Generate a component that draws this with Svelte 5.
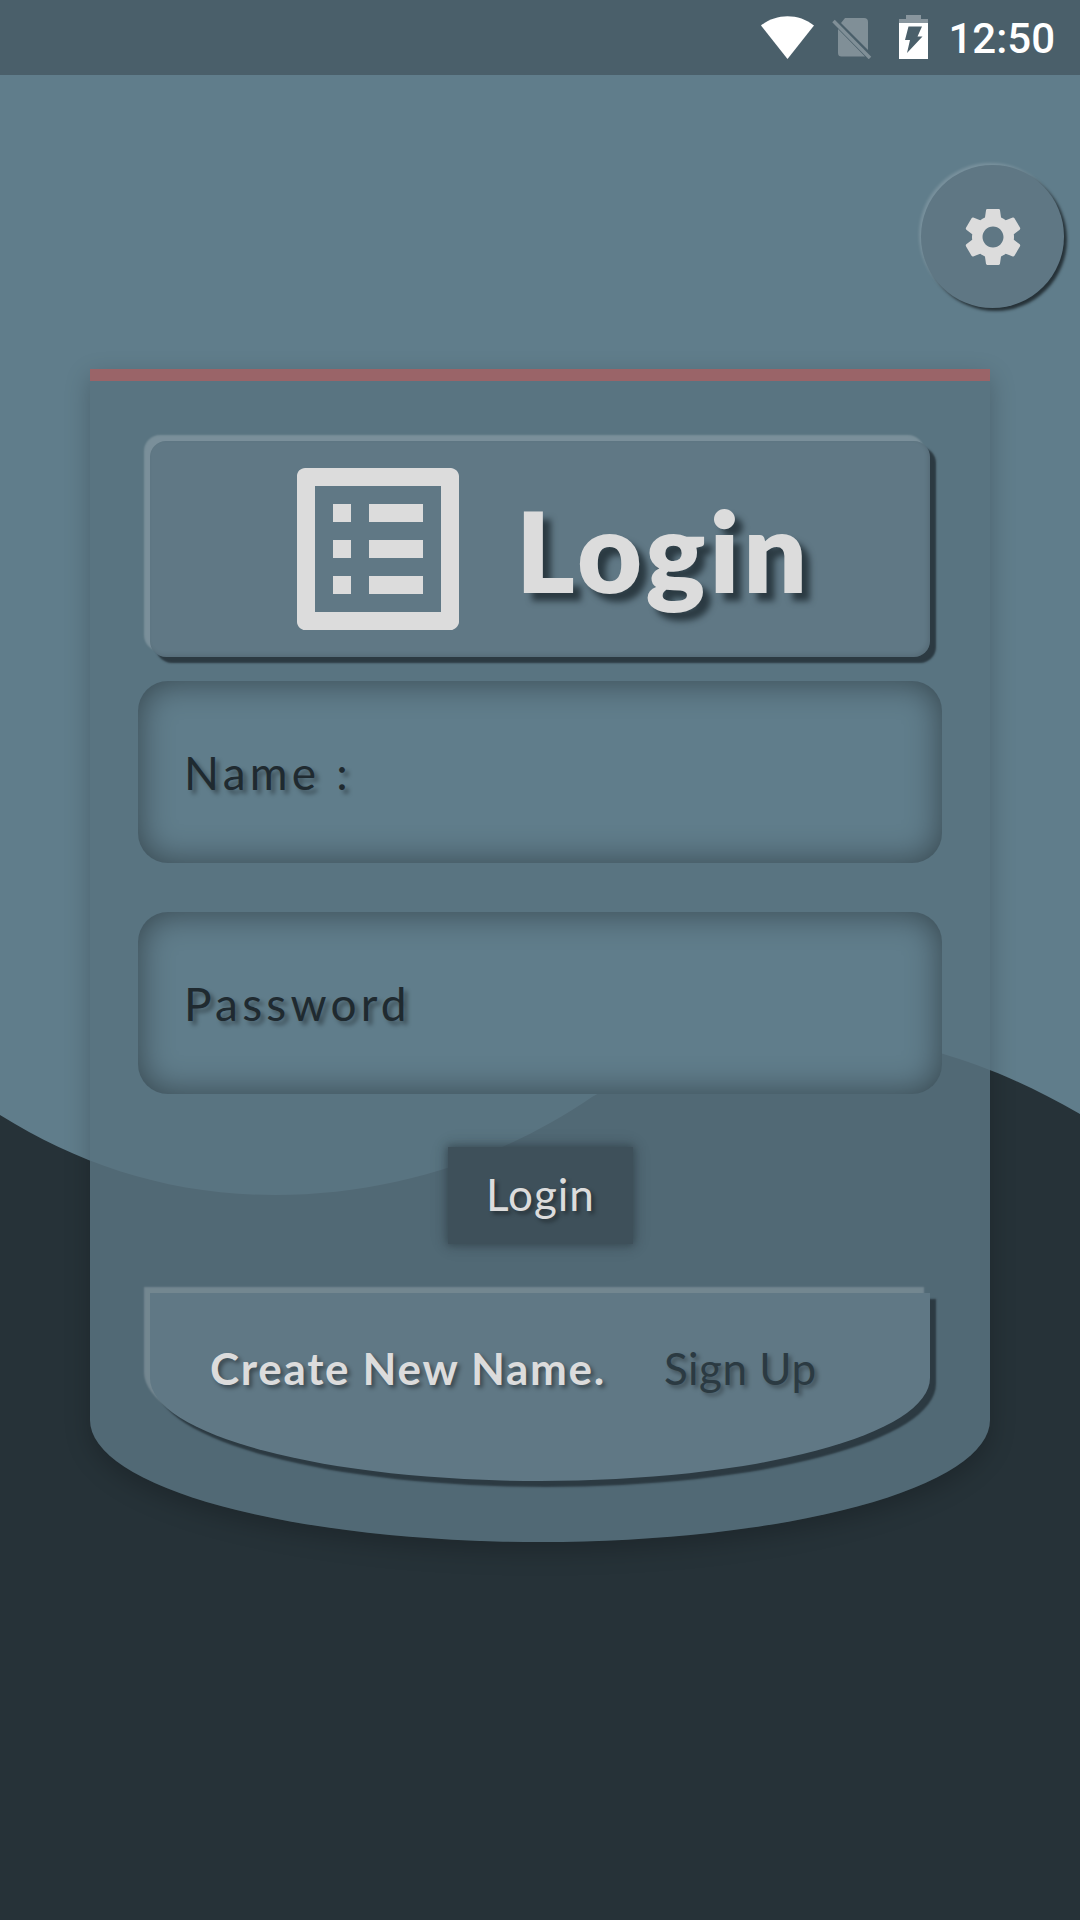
<script>
  let name = "Name :";
  let password = "Password";
</script>

<div class="page">
  <svg class="backdrop" viewBox="0 0 1080 1920" aria-hidden="true">
    <path d="M0 0H1080V1114C1030 1085 985 1066 940 1053C830 1022 690 1040 592 1097C500 1160 390 1195 275 1195C170 1195 80 1165 0 1115Z" fill="#607d8b" />
  </svg>

  <div class="statusbar">
    <svg class="wifi" viewBox="0 0 53 43">
      <path d="M26.500 43L0 9.500C15 -3 38 -3 53 9.500Z" fill="#fff" />
    </svg>
    <svg class="nosim" viewBox="0 0 40 41">
      <path d="M13 0H32Q36 0 36 4V32L9 5ZM6 11V35Q6 38.500 9.500 38.500H33Z" fill="#fff" fill-opacity=".3" />
      <path d="M1.500 3L38 40" stroke="#fff" stroke-opacity=".3" stroke-width="3.500" />
    </svg>
    <svg class="battery" viewBox="0 0 29 44">
      <path d="M7 0H22V4H29V8H0V4H7Z" fill="#fff" fill-opacity=".35" />
      <path d="M0 8H29V44H0ZM9.500 11.500H23L18.500 21.500H23.500L8 38L11 25H6Z" fill="#fff" fill-rule="evenodd" />
    </svg>
    <span class="time">12:50</span>
  </div>

  <div class="settings-row">
    <button class="settings">
      <svg viewBox="0 0 24 24" width="70" height="70">
        <path fill="#dcdcdc" d="M19.14 12.94c.04-.3.06-.61.06-.94 0-.32-.02-.64-.07-.94l2.03-1.58c.18-.14.23-.41.12-.61l-1.92-3.32c-.12-.22-.37-.29-.59-.22l-2.39.96c-.5-.38-1.03-.7-1.62-.94l-.36-2.54c-.04-.24-.24-.41-.48-.41h-3.84c-.24 0-.43.17-.47.41l-.36 2.54c-.59.24-1.13.57-1.62.94l-2.39-.96c-.22-.08-.47 0-.59.22L2.74 8.87c-.12.21-.08.47.12.61l2.03 1.58c-.05.3-.09.63-.09.94s.02.64.07.94l-2.03 1.58c-.18.14-.23.41-.12.61l1.92 3.32c.12.22.37.29.59.22l2.39-.96c.5.38 1.03.7 1.62.94l.36 2.54c.05.24.24.41.48.41h3.84c.24 0 .44-.17.47-.41l.36-2.54c.59-.24 1.13-.56 1.62-.94l2.39.96c.22.08.47 0 .59-.22l1.92-3.32c.12-.22.07-.47-.12-.61l-2.01-1.58zM12 15.6c-1.98 0-3.6-1.62-3.6-3.6s1.62-3.6 3.6-3.6 3.6 1.62 3.6 3.6-1.62 3.6-3.6 3.6z" />
      </svg>
    </button>
  </div>

  <div class="card">
    <div class="card-inner">
      <div class="header">
        <svg viewBox="0 0 24 24" width="216" height="216">
          <path fill="#dcdcdc" d="M19 5v14H5V5h14m1.100-2H3.900c-.5 0-.9.4-.9.9v16.200c0 .4.4.9.9.9h16.200c.4 0 .9-.5.9-.9V3.900c0-.5-.5-.9-.9-.9zM11 7h6v2h-6V7zm0 4h6v2h-6v-2zm0 4h6v2h-6zM7 7h2v2H7zm0 4h2v2H7zm0 4h2v2H7z" />
        </svg>
        <h1>Login</h1>
      </div>

      <div class="field">{name}</div>
      <div class="field second">{password}</div>

      <button class="login">Login</button>

      <div class="signup">
        <span class="create">Create New Name.</span>
        <span class="link">Sign Up</span>
      </div>
    </div>
  </div>
</div>

<style>
  :global(body) {
    margin: 0;
    background: #263238;
  }
  .page {
    position: relative;
    width: 1080px;
    height: 1920px;
    overflow: hidden;
    background: #263238;
    font-family: "Lato", "Open Sans", sans-serif;
  }
  .backdrop {
    position: absolute;
    left: 0;
    top: 0;
    width: 1080px;
    height: 1920px;
  }
  .statusbar {
    position: relative;
    height: 75px;
    box-sizing: border-box;
    background: #4a5f6a;
    display: flex;
    justify-content: flex-end;
    align-items: flex-start;
    padding-right: 25px;
  }
  .wifi {
    width: 53px;
    height: 43px;
    margin-top: 16px;
  }
  .nosim {
    width: 40px;
    height: 41px;
    margin-top: 18px;
    margin-left: 18px;
  }
  .battery {
    width: 29px;
    height: 44px;
    margin-top: 15px;
    margin-left: 27px;
  }
  .time {
    margin-left: 20.500px;
    margin-top: 16px;
    font-family: "Roboto", sans-serif;
    font-size: 42px;
    font-weight: 500;
    line-height: 46px;
    color: #fff;
  }
  .settings-row {
    position: relative;
    display: flex;
    justify-content: flex-end;
    padding: 90px 16px 0 0;
    height: 143px;
  }
  .settings {
    width: 143px;
    height: 143px;
    padding: 0;
    border: 0;
    border-radius: 50%;
    background: #5f7784;
    display: flex;
    align-items: center;
    justify-content: center;
    box-shadow: -2px -2px 3px rgba(255, 255, 255, .16), 3px 3px 3px #263238;
  }
  .card {
    position: relative;
    width: 900px;
    height: 1173px;
    margin: 61px 0 0 90px;
    border-top: 12px solid #9a6468;
    box-sizing: border-box;
    border-radius: 0 0 450px 450px / 0 0 122px 122px;
    background: rgba(88, 114, 127, .86);
    box-shadow: 0 8px 26px rgba(0, 0, 0, .22);
  }
  .card-inner {
    display: flex;
    flex-direction: column;
    padding: 60px 48px 0 48px;
  }
  .header {
    width: 780px;
    height: 216px;
    margin-left: 12px;
    display: flex;
    align-items: center;
    box-sizing: border-box;
    padding-left: 120px;
    border-radius: 16px;
    background: #607885;
    box-shadow: -6px -6px 2px rgba(255, 255, 255, .2), 6px 6px 2px #2c3a42, inset -2px -2px 4px rgba(0, 0, 0, .1);
  }
  h1 {
    margin: 0 0 0 30px;
    font-size: 112px;
    font-weight: 800;
    letter-spacing: 4px;
    color: #dcdcdc;
    text-shadow: 8px 8px 6px #2b3a42;
  }
  .field {
    width: 804px;
    height: 182px;
    margin-top: 24px;
    box-sizing: border-box;
    padding-left: 46px;
    display: flex;
    align-items: center;
    border-radius: 30px;
    background: #607d8b;
    box-shadow: inset 0 0 34px rgba(0, 0, 0, .46);
    font-size: 46px;
    letter-spacing: 4.200px;
    color: #1f2a30;
    text-shadow: 4px 4px 4px rgba(0, 0, 0, .35);
  }
  .second {
    margin-top: 49px;
  }
  .login {
    width: 185px;
    height: 97px;
    margin: 53px 0 0 310px;
    padding: 0 0 4px;
    border: 0;
    background: #3e505a;
    box-shadow: 0 0 8px 1px rgba(50, 66, 75, .8), 0 0 18px rgba(0, 0, 0, .15);
    font-family: inherit;
    font-size: 44px;
    letter-spacing: 1px;
    color: #dcdcdc;
    text-shadow: 3px 3px 4px rgba(0, 0, 0, .4);
  }
  .signup {
    width: 780px;
    height: 188px;
    margin: 49px 0 0 12px;
    box-sizing: border-box;
    padding: 49px 0 0 60px;
    display: flex;
    gap: 58px;
    align-items: baseline;
    border-radius: 0 0 390px 390px / 0 0 103px 103px;
    background: #607885;
    box-shadow: -6px -6px 2px rgba(255, 255, 255, .2), 6px 6px 2px #2c3a42;
    font-size: 44px;
  }
  .create {
    font-weight: 700;
    letter-spacing: 1.700px;
    color: #dcdcdc;
    text-shadow: 3px 3px 4px rgba(0, 0, 0, .4);
  }
  .link {
    letter-spacing: .5px;
    color: #2b3a42;
    text-shadow: 3px 3px 4px rgba(0, 0, 0, .35);
  }
</style>
